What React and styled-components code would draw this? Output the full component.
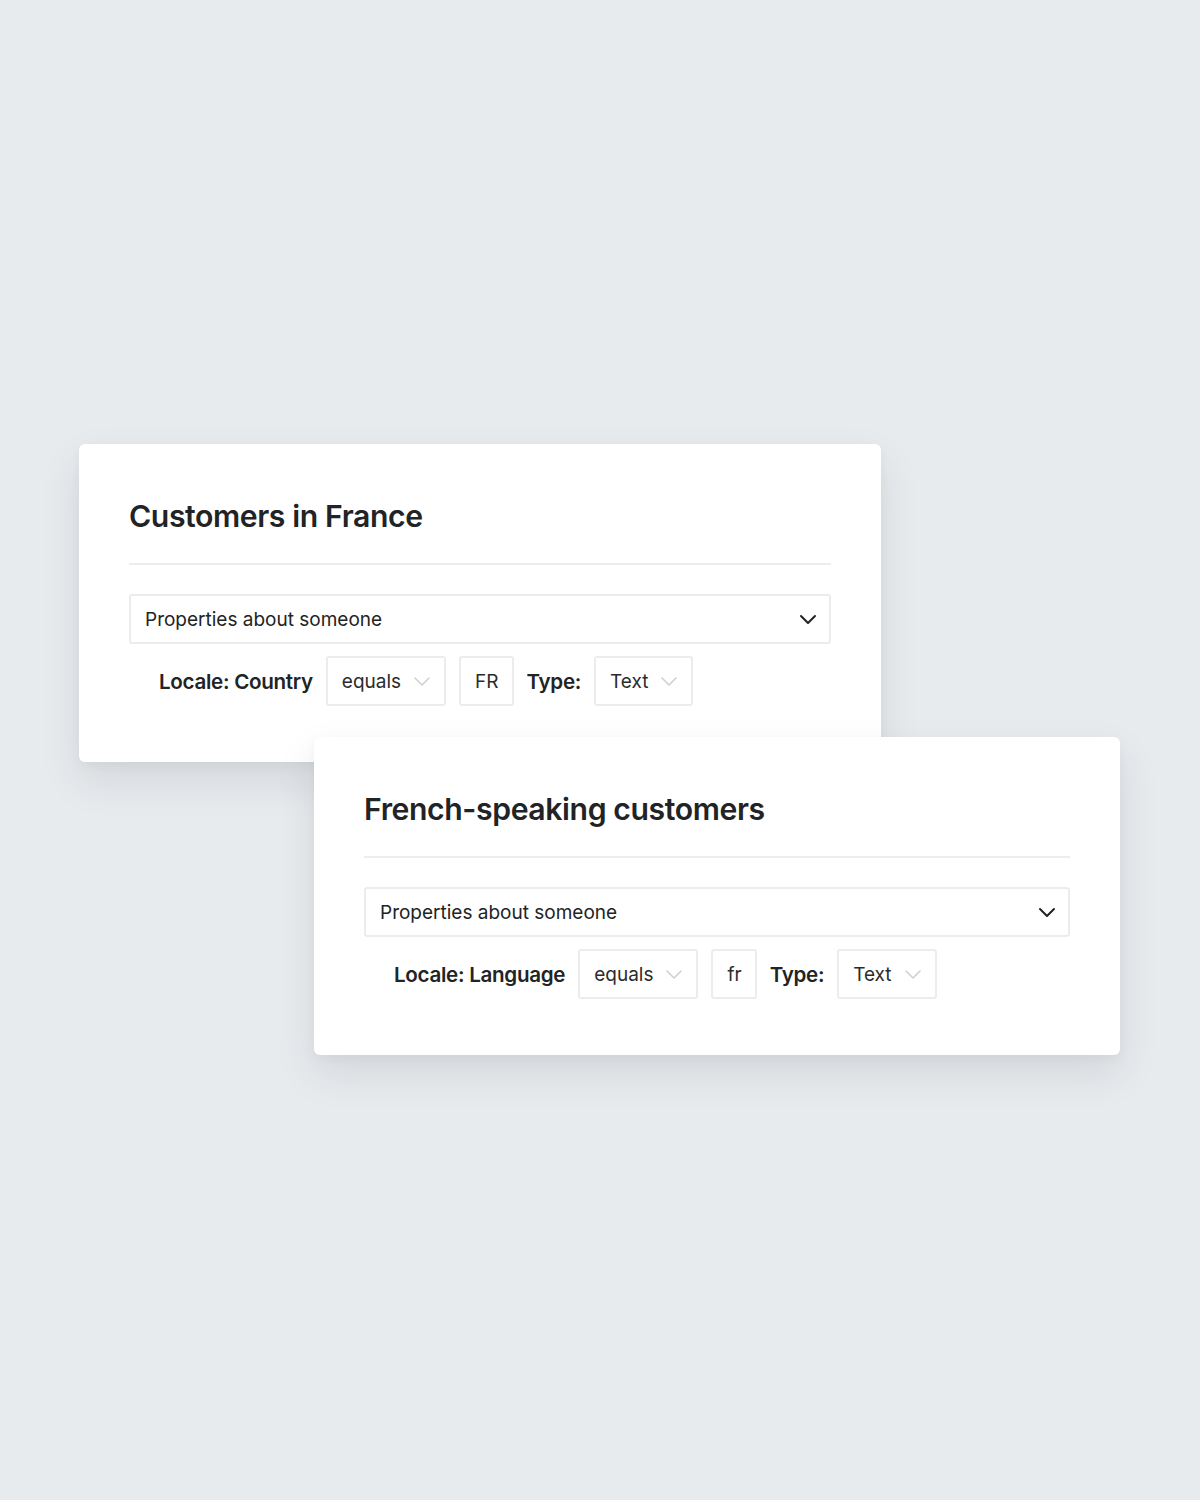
import React from "react";
import styled, { createGlobalStyle } from "styled-components";

const Global = createGlobalStyle`
  html, body { margin: 0; padding: 0; }
  body {
    background: #e8ebee;
    font-family: Inter, "Noto Sans", sans-serif;
    color: #222324;
  }
`;

const Page = styled.div`
  width: 1200px;
  height: 1500px;
  box-sizing: border-box;
  padding-top: 444px;
  display: flex;
  flex-direction: column;
`;

const Card = styled.section`
  position: relative;
  z-index: ${(p) => p.$z};
  box-sizing: border-box;
  width: ${(p) => p.$w}px;
  margin-left: ${(p) => p.$left}px;
  margin-top: ${(p) => p.$top || 0}px;
  background: #fff;
  border-radius: 6px;
  padding: 50px 50px 56px;
  box-shadow: 0 18px 40px rgba(30, 40, 50, 0.10), 0 4px 10px rgba(30, 40, 50, 0.04);
`;

const Title = styled.h2`
  margin: 0;
  font-size: 30.2px;
  line-height: 44px;
  font-weight: 600;
  letter-spacing: -0.4px;
  padding-bottom: 25px;
  border-bottom: 2px solid #eceded;
`;

const Select = styled.div`
  margin-top: 29px;
  height: 50px;
  box-sizing: border-box;
  border: 2px solid #ececec;
  border-radius: 3px;
  display: flex;
  align-items: center;
  justify-content: space-between;
  padding: 0 12px 0 14px;
  font-size: 19px;
`;

const Row = styled.div`
  margin-top: 12px;
  padding-left: 30px;
  display: flex;
  align-items: center;
  gap: 13px;
`;

const Label = styled.span`
  font-size: 20.6px;
  font-weight: 600;
  letter-spacing: -0.3px;
`;

const Box = styled.div`
  height: 50px;
  box-sizing: border-box;
  border: 2px solid #ececec;
  border-radius: 3px;
  display: flex;
  align-items: center;
  gap: 12px;
  padding: 0 13px 0 14px;
  font-size: 19px;
  color: #2a2b2c;
`;

const Chevron = ({ color = "#222", w = 2 }) => (
  <svg width="18" height="12" viewBox="0 0 18 12" fill="none">
    <path d="M2 3 L9 10 L16 3" stroke={color} strokeWidth={w} strokeLinecap="round" strokeLinejoin="round" />
  </svg>
);

const SmallChevron = () => <Chevron color="#cfd0d2" w={1.6} />;

const Filter = ({ title, label, value, width, left, top, z }) => (
  <Card $w={width} $left={left} $top={top} $z={z}>
    <Title>{title}</Title>
    <Select>
      <span>Properties about someone</span>
      <Chevron />
    </Select>
    <Row>
      <Label>{label}</Label>
      <Box>
        equals <SmallChevron />
      </Box>
      <Box>{value}</Box>
      <Label>Type:</Label>
      <Box>
        Text <SmallChevron />
      </Box>
    </Row>
  </Card>
);

export default function App() {
  return (
    <>
      <Global />
      <Page>
        <Filter title="Customers in France" label="Locale: Country" value="FR" width={802} left={79} z={1} />
        <Filter title="French-speaking customers" label="Locale: Language" value="fr" width={806} left={314} top={-25} z={2} />
      </Page>
    </>
  );
}
